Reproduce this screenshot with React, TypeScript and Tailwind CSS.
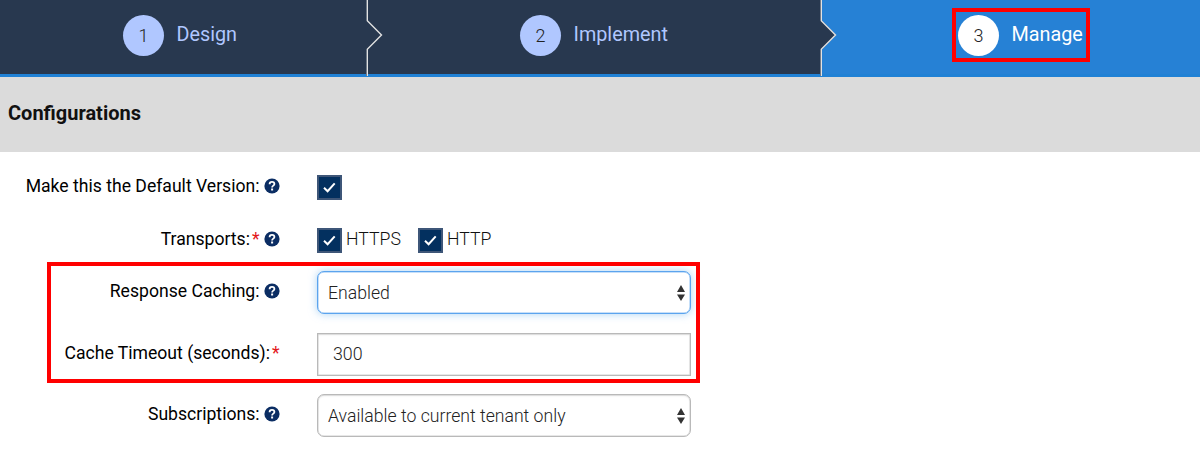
import type { ReactNode } from 'react';

function Step({ n, label, active, className }: { n: number; label: string; active?: boolean; className: string }) {
  return (
    <div className={`flex h-full items-start pt-[15px] ${className}`}>
      <div className="relative flex h-10 items-center">
        <span
          className={`flex size-[41px] items-center justify-center rounded-full text-[18px] font-light text-[#222] ${
            active ? 'bg-white' : 'bg-[#b0c7ff]'
          }`}
        >
          {n}
        </span>
        <span className={`ml-[12.5px] text-[19.8px] leading-6 ${active ? 'text-white' : 'text-[#b0c7ff]'}`}>{label}</span>
        {active && <div className="absolute -top-[7px] -left-1.5 h-[54px] w-[138px] border-4 border-[#ff0000]" />}
      </div>
    </div>
  );
}

function Divider({ className }: { className: string }) {
  return (
    <svg className={`absolute top-0 h-[76px] w-[18px] ${className}`} viewBox="0 0 18 76">
      <path d="M0 0H2V20.5L16 35L2 49.5V76H0Z" fill="#28384f" />
      <path d="M1.3 0V20.7L15.5 35L1.3 49.3V76" fill="none" stroke="#e2e2e2" strokeWidth="1.4" />
    </svg>
  );
}

function Help() {
  return (
    <svg className="ml-1 size-[16px] shrink-0" viewBox="0 0 16 16">
      <circle cx="8" cy="8" r="7.6" fill="#0b2d63" />
      <path d="M5.6 6.2C5.6 4.8 6.6 3.9 8 3.9S10.4 4.8 10.4 6C10.4 7.6 8.1 7.7 8.1 9.4" fill="none" stroke="#fff" strokeWidth="1.8" />
      <rect x="7.1" y="10.5" width="2" height="2" fill="#fff" />
    </svg>
  );
}

function Row({ label, required, help, className, children }: {
  label: string;
  required?: boolean;
  help?: boolean;
  className: string;
  children: ReactNode;
}) {
  return (
    <div className={`flex items-center ${className}`}>
      <div className="mr-[37.5px] flex w-[279.5px] items-center justify-end pb-[3px] text-[17.6px] leading-6 whitespace-nowrap text-black">
        <span>{label}</span>
        {required && <span className="ml-0.5 text-[#e3161b]">*</span>}
        {help && <Help />}
      </div>
      {children}
    </div>
  );
}

function Check() {
  return (
    <span className="flex size-[25px] items-center justify-center border-2 border-[#3e5678] bg-[#03305f]">
      <svg className="size-[15px]" viewBox="0 0 15 15">
        <path d="M2 7.8L5.6 11.2L12.7 3.4" fill="none" stroke="#fff" strokeWidth="2" />
      </svg>
    </span>
  );
}

function Select({ value, focused }: { value: string; focused?: boolean }) {
  return (
    <div
      className={`flex h-[43px] w-[374px] items-center justify-between rounded-[7px] border bg-white pr-[5px] pl-[10px] text-[17.65px] font-light text-[#222] ${
        focused
          ? 'border-[#5ba4ee] shadow-[inset_0_0_0_0.5px_#8fc0f2,0_0_8px_rgba(102,175,233,0.55)]'
          : 'border-[#b9b9b9] shadow-[inset_0_0_0_0.5px_#d0d0d0,inset_0_1px_2px_rgba(0,0,0,0.1)]'
      }`}
    >
      <span className="pt-px">{value}</span>
      <svg className="h-[16px] w-[8px]" viewBox="0 0 8 16">
        <path d="M4 0L8 7H0ZM4 16L0 9.4H8Z" fill="#333" />
      </svg>
    </div>
  );
}

export default function App() {
  return (
    <div className="h-[456px] w-[1200px] overflow-hidden bg-white font-['Roboto',sans-serif]">
      <header className="relative flex h-[77px] border-b-[3px] border-[#2081d5] bg-[#28384f]">
        <Step n={1} label="Design" className="w-[367px] pl-[123px]" />
        <Step n={2} label="Implement" className="w-[455px] pl-[153px]" />
        <Step n={3} label="Manage" active className="flex-1 bg-[#2681d5] pl-[136px]" />
        <Divider className="left-[366px]" />
        <Divider className="left-[820px]" />
      </header>
      <div className="flex h-[75px] items-center bg-[#dbdbdb] pb-1 pl-2 text-[20px] font-bold text-[#111]">
        Configurations
      </div>
      <main className="pt-[23px]">
        <Row label="Make this the Default Version:" help className="h-[25px]">
          <Check />
        </Row>
        <Row label="Transports:" required help className="mt-7 h-[25px]">
          <div className="flex items-center text-[17.7px] leading-6 font-light text-[#111]">
            <Check />
            <span className="ml-1 w-[72px] pb-1">HTTPS</span>
            <Check />
            <span className="ml-1 pb-1">HTTP</span>
          </div>
        </Row>
        <section className="relative mt-[18px]">
          <Row label="Response Caching:" help className="h-[43px]">
            <Select value="Enabled" focused />
          </Row>
          <Row label="Cache Timeout (seconds):" required className="mt-[19px] h-[43px]">
            <div className="flex h-[43px] w-[374px] items-center border border-[#b9b9b9] pb-px pl-[15px] text-[17.8px] font-light text-[#222] shadow-[inset_0_0_0_0.5px_#d0d0d0,inset_0_1px_2px_rgba(0,0,0,0.1)]">
              300
            </div>
          </Row>
          <div className="absolute -top-[9px] left-[47px] h-[121px] w-[653px] border-4 border-[#ff0000]" />
        </section>
        <Row label="Subscriptions:" help className="mt-[18px] h-[43px]">
          <Select value="Available to current tenant only" />
        </Row>
      </main>
    </div>
  );
}
